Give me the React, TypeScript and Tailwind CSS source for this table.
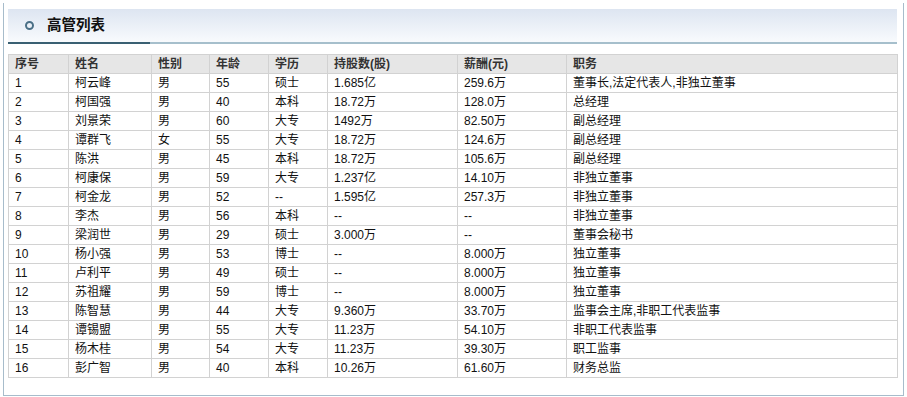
const FONT = "font-['Liberation_Sans','Noto_Sans_CJK_SC',sans-serif]";

const COLS = [
  { label: "序号", w: "w-[60px]" },
  { label: "姓名", w: "w-[83px]" },
  { label: "性别", w: "w-[58px]" },
  { label: "年龄", w: "w-[59px]" },
  { label: "学历", w: "w-[59px]" },
  { label: "持股数(股)", w: "w-[130px]" },
  { label: "薪酬(元)", w: "w-[109px]" },
  { label: "职务", w: "w-[331px]" },
];

const ROWS: string[][] = [
  ["1", "柯云峰", "男", "55", "硕士", "1.685亿", "259.6万", "董事长,法定代表人,非独立董事"],
  ["2", "柯国强", "男", "40", "本科", "18.72万", "128.0万", "总经理"],
  ["3", "刘景荣", "男", "60", "大专", "1492万", "82.50万", "副总经理"],
  ["4", "谭群飞", "女", "55", "大专", "18.72万", "124.6万", "副总经理"],
  ["5", "陈洪", "男", "45", "本科", "18.72万", "105.6万", "副总经理"],
  ["6", "柯康保", "男", "59", "大专", "1.237亿", "14.10万", "非独立董事"],
  ["7", "柯金龙", "男", "52", "--", "1.595亿", "257.3万", "非独立董事"],
  ["8", "李杰", "男", "56", "本科", "--", "--", "非独立董事"],
  ["9", "梁润世", "男", "29", "硕士", "3.000万", "--", "董事会秘书"],
  ["10", "杨小强", "男", "53", "博士", "--", "8.000万", "独立董事"],
  ["11", "卢利平", "男", "49", "硕士", "--", "8.000万", "独立董事"],
  ["12", "苏祖耀", "男", "59", "博士", "--", "8.000万", "独立董事"],
  ["13", "陈智慧", "男", "44", "大专", "9.360万", "33.70万", "监事会主席,非职工代表监事"],
  ["14", "谭锡盟", "男", "55", "大专", "11.23万", "54.10万", "非职工代表监事"],
  ["15", "杨木桂", "男", "54", "大专", "11.23万", "39.30万", "职工监事"],
  ["16", "彭广智", "男", "40", "本科", "10.26万", "61.60万", "财务总监"],
];

export default function App() {
  return (
    <div className={`${FONT} bg-white w-[907px] h-[397px] pt-[3px]`}>
      <div className="ml-[3px] w-[901px] h-[393px] border-x border-b border-[#a7bccb] pl-[4px] pr-[6px] pt-[6px]">
        {/* Title bar */}
        <div className="h-[35px] bg-gradient-to-b from-[#dde5f1] to-[#fafcfe] flex flex-col">
          <div className="flex-1 flex items-center pl-[17px]">
            <span className="w-[9px] h-[9px] rounded-full border-2 border-[#4a6f86]" />
            <span className="ml-[13px] text-[14.5px] font-bold text-[#111]">高管列表</span>
          </div>
          <div className="flex h-[2px]">
            <div className="w-[142px] bg-[#3a6072]" />
            <div className="flex-1 bg-[#a6bfcc]" />
          </div>
        </div>

        {/* Table */}
        <table className="mt-[10px] w-[889px] table-fixed border-collapse text-[12px] leading-none">
          <thead>
            <tr className="bg-[#e6e6e6]">
              {COLS.map((c) => (
                <th
                  key={c.label}
                  className={`${c.w} h-[19px] border border-[#d2d2d2] pl-[6px] text-left font-bold text-[#333]`}
                >
                  {c.label}
                </th>
              ))}
            </tr>
          </thead>
          <tbody>
            {ROWS.map((r) => (
              <tr key={r[0]}>
                {r.map((v, i) => (
                  <td key={i} className="h-[19px] border border-[#d2d2d2] pl-[6px] text-[#111] whitespace-nowrap">
                    {v}
                  </td>
                ))}
              </tr>
            ))}
          </tbody>
        </table>
      </div>
    </div>
  );
}
